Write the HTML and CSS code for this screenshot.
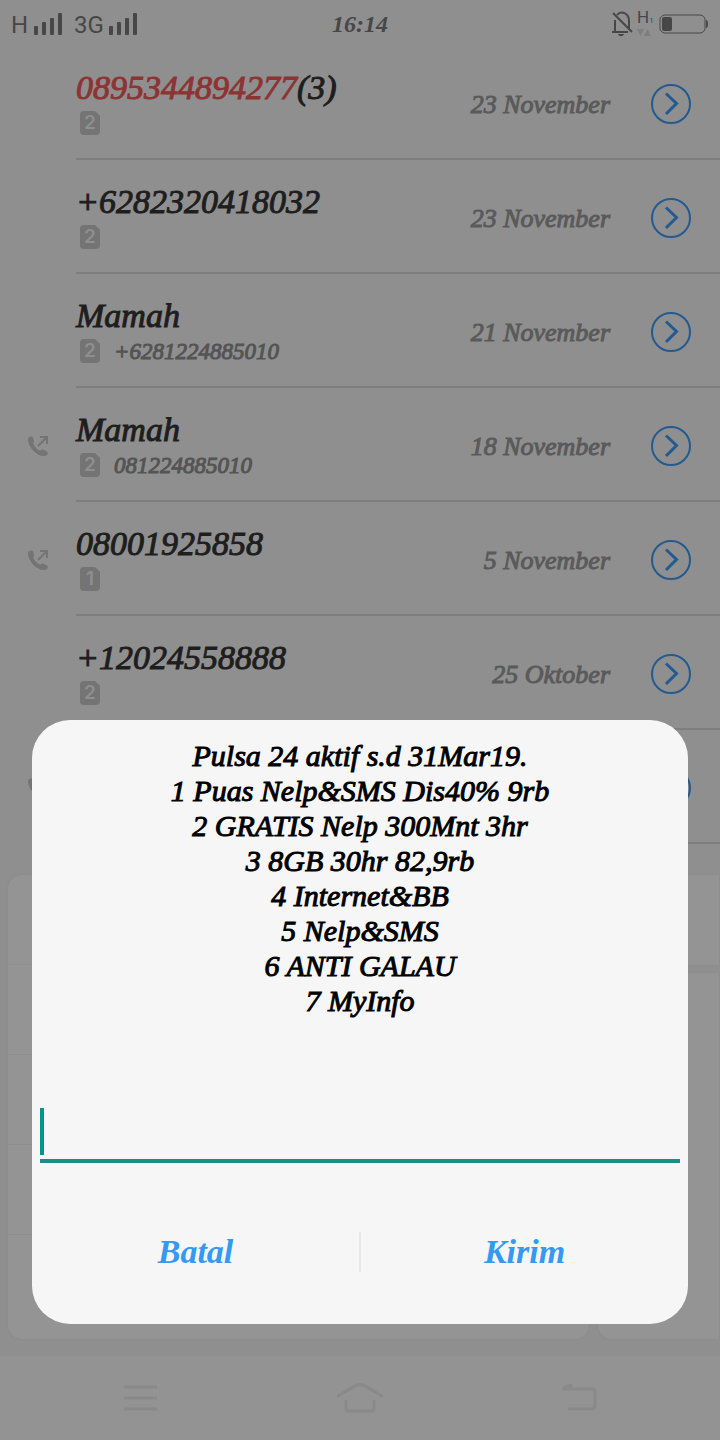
FILE: index.html
```html
<!DOCTYPE html>
<html lang="id">
<head>
    <meta charset="UTF-8">
    <meta name="viewport" content="width=device-width, initial-scale=1.0">
    <title>Telepon</title>
    <link rel="stylesheet" href="styles.css">
</head>
<body>
    <!-- shared icons -->
    <svg class="sprite" aria-hidden="true">
        <symbol id="signal" viewBox="0 0 28 22">
            <rect x="0" y="13" width="4" height="9" rx="1"/>
            <rect x="8" y="9" width="4" height="13" rx="1"/>
            <rect x="16" y="5" width="4" height="17" rx="1"/>
            <rect x="24" y="0" width="4" height="22" rx="1"/>
        </symbol>
        <symbol id="outgoing" viewBox="0 0 20 20">
            <path d="M0.500 1.500C2 0 4.500 0 5 1.500L6 4.500C6.300 6 5 7 5.500 8C6.500 10.500 9 13.500 11.500 14.500C13 14.800 13.500 13.300 15 13.500L19 15.500C20.500 17 20 18.500 18.500 19.500C14 21 9 19 5 14.500C1 10 -1 5 0.500 1.500Z"/>
            <path d="M10 10L18.500 1.500M12 1H19V8" fill="none" stroke="currentColor" stroke-width="2"/>
        </symbol>
        <symbol id="more" viewBox="0 0 40 40">
            <circle cx="20" cy="20" r="19"/>
            <path d="M15 9.500L25.500 19.500L15 30" stroke-width="3"/>
        </symbol>
    </svg>

    <div class="phone">
        <header class="status-bar">
            <div class="networks">
                <span class="network">H</span>
                <svg class="signal"><use href="#signal"/></svg>
                <span class="network second">3G</span>
                <svg class="signal"><use href="#signal"/></svg>
            </div>
            <time class="clock">16:14</time>
            <div class="status-icons">
                <svg class="bell" viewBox="0 0 22 26">
                    <path d="M4 20V9M6 4C10 -1 18 2 18 10V17M1 21H17M2 2L21 21" fill="none" stroke="currentColor" stroke-width="2"/>
                    <path d="M7 23H13C12 26 8 26 7 23Z"/>
                </svg>
                <div class="data">
                    <span class="data-type">H<small>1</small></span>
                    <svg class="data-arrows" viewBox="0 0 14 7"><path d="M0 0H7L3.500 7ZM7 7H14L10.500 0Z"/></svg>
                </div>
                <svg class="battery" viewBox="0 0 50 20">
                    <rect x="1" y="1" width="45" height="18" rx="5" fill="none" stroke="currentColor"/>
                    <rect x="3" y="3" width="10" height="14" rx="2"/>
                    <path d="M47 6Q49 6 49 10Q49 14 47 14Z"/>
                </svg>
            </div>
        </header>

        <main class="calls">
            <article class="call">
                <div class="call-body">
                    <div class="who">
                        <div class="name"><span class="missed">0895344894277</span>(3)</div>
                        <div class="line"><span class="sim">2</span></div>
                    </div>
                    <span class="date">23 November</span>
                    <button class="more" aria-label="Detail"><svg><use href="#more"/></svg></button>
                </div>
            </article>
            <article class="call">
                <div class="call-body">
                    <div class="who">
                        <div class="name">+6282320418032</div>
                        <div class="line"><span class="sim">2</span></div>
                    </div>
                    <span class="date">23 November</span>
                    <button class="more" aria-label="Detail"><svg><use href="#more"/></svg></button>
                </div>
            </article>
            <article class="call">
                <div class="call-body">
                    <div class="who">
                        <div class="name">Mamah</div>
                        <div class="line"><span class="sim">2</span><span class="number">+6281224885010</span></div>
                    </div>
                    <span class="date">21 November</span>
                    <button class="more" aria-label="Detail"><svg><use href="#more"/></svg></button>
                </div>
            </article>
            <article class="call">
                <svg class="outgoing"><use href="#outgoing"/></svg>
                <div class="call-body">
                    <div class="who">
                        <div class="name">Mamah</div>
                        <div class="line"><span class="sim">2</span><span class="number">081224885010</span></div>
                    </div>
                    <span class="date">18 November</span>
                    <button class="more" aria-label="Detail"><svg><use href="#more"/></svg></button>
                </div>
            </article>
            <article class="call">
                <svg class="outgoing"><use href="#outgoing"/></svg>
                <div class="call-body">
                    <div class="who">
                        <div class="name">08001925858</div>
                        <div class="line"><span class="sim">1</span></div>
                    </div>
                    <span class="date">5 November</span>
                    <button class="more" aria-label="Detail"><svg><use href="#more"/></svg></button>
                </div>
            </article>
            <article class="call">
                <div class="call-body">
                    <div class="who">
                        <div class="name">+12024558888</div>
                        <div class="line"><span class="sim">2</span></div>
                    </div>
                    <span class="date">25 Oktober</span>
                    <button class="more" aria-label="Detail"><svg><use href="#more"/></svg></button>
                </div>
            </article>
            <article class="call">
                <svg class="outgoing"><use href="#outgoing"/></svg>
                <div class="call-body">
                    <div class="who"></div>
                    <button class="more" aria-label="Detail"><svg><use href="#more"/></svg></button>
                </div>
            </article>
        </main>

        <!-- dial pad behind the dialog -->
        <div class="dialpad">
            <div class="pad keys">
                <div class="key-row"></div>
                <div class="key-row"></div>
                <div class="key-row"></div>
                <div class="key-row"></div>
            </div>
            <div class="side">
                <div class="pad side-top"></div>
                <div class="pad side-bottom"></div>
            </div>
        </div>

        <nav class="nav-bar">
            <button aria-label="Menu">
                <svg width="34" height="30" viewBox="0 0 34 30"><path d="M2 4H33M2 15H33M2 26H33"/></svg>
            </button>
            <button aria-label="Beranda">
                <svg width="48" height="30" viewBox="0 0 48 30"><path d="M2 13L19 3Q24 0 29 3L46 13M10 18V25Q10 28 13 28H35Q38 28 38 25V18"/></svg>
            </button>
            <button aria-label="Kembali">
                <svg width="36" height="30" viewBox="0 0 36 30"><path d="M2 6H30Q33 6 33 9V23Q33 26 30 26H7M2 5L9 2V6"/></svg>
            </button>
        </nav>
    </div>

    <form class="dialog" role="dialog" aria-labelledby="message">
        <p class="message" id="message">
            Pulsa 24 aktif s.d 31Mar19.<br>
            1 Puas Nelp&amp;SMS Dis40% 9rb<br>
            2 GRATIS Nelp 300Mnt 3hr<br>
            3 8GB 30hr 82,9rb<br>
            4 Internet&amp;BB<br>
            5 Nelp&amp;SMS<br>
            6 ANTI GALAU<br>
            7 MyInfo
        </p>
        <div class="reply">
            <input type="text" aria-labelledby="message">
            <span class="caret"></span>
        </div>
        <div class="actions">
            <button type="button">Batal</button>
            <span class="divider"></span>
            <button type="submit">Kirim</button>
        </div>
    </form>
</body>
</html>
```

FILE: styles.css
```css
* {
    box-sizing: border-box;
}

body {
    margin: 0;
    background: #8f8f8f;
    color: #1e1e1e;
    font-family: "Liberation Serif", serif;
    font-style: italic;
}

button {
    padding: 0;
    border: none;
    background: none;
    font: inherit;
    cursor: pointer;
}

svg {
    display: block;
    fill: currentColor;
}

.sprite {
    display: none;
}

.phone {
    position: relative;
    display: flex;
    flex-direction: column;
    min-height: 100vh;
}

/* status bar */
.status-bar {
    display: grid;
    grid-template-columns: 1fr auto 1fr;
    align-items: center;
    height: 46px;
    padding: 2px 11px 0;
    color: #474747;
}

.networks {
    display: flex;
    align-items: flex-end;
    font: 400 24px/24px Roboto, sans-serif;
}

.network {
    width: 23px;
    height: 22px;
}

.network.second {
    width: 35px;
    margin-left: 12px;
}

.signal {
    width: 28px;
    height: 22px;
}

.clock {
    font-size: 24px;
    font-weight: bold;
}

.status-icons {
    display: flex;
    justify-content: flex-end;
    align-items: center;
}

.bell {
    width: 22px;
    height: 26px;
}

.data {
    width: 21px;
    height: 30px;
    margin-left: 4px;
    font: 400 17px/16px Roboto, sans-serif;
}

.data-type {
    display: block;
}

.data small {
    font-size: 8px;
}

.data-arrows {
    width: 14px;
    height: 7px;
    color: #7e7e7e;
}

.battery {
    width: 50px;
    height: 20px;
    margin-left: 1px;
}

/* call log */
.calls {
    flex: 1;
}

.call {
    position: relative;
    padding-left: 76px;
}

.outgoing {
    position: absolute;
    left: 28px;
    top: 48px;
    width: 20px;
    height: 20px;
    color: #747474;
}

.call-body {
    display: flex;
    align-items: center;
    height: 114px;
    padding: 4px 29px 0 0;
    border-bottom: 2px solid #7e7e7e;
}

.who {
    flex: 1;
}

.name {
    font-size: 34px;
    line-height: 38px;
    -webkit-text-stroke: 1px currentColor;
}

.missed {
    color: #8c3434;
}

.line {
    display: flex;
    align-items: center;
    height: 32px;
    padding-left: 4px;
}

.sim {
    width: 20px;
    height: 24px;
    border-radius: 4px;
    background: #747474;
    clip-path: polygon(0 0, 75% 0, 100% 20%, 100% 100%, 0 100%);
    color: #8f8f8f;
    font: 600 19px/24px Inter, sans-serif;
    text-align: center;
}

.number {
    margin-left: 14px;
    padding-top: 2px;
    color: #545454;
    font-size: 23px;
}

.number,
.date {
    -webkit-text-stroke: 1px currentColor;
}

.date {
    padding-top: 2px;
    color: #5a5a5a;
    font-size: 26px;
}

.more {
    margin-left: 41px;
}

.more svg {
    width: 40px;
    height: 40px;
    fill: none;
    stroke: #235b91;
    stroke-width: 2;
}

/* dial pad */
.dialpad {
    position: absolute;
    left: 8px;
    right: 1px;
    bottom: 101px;
    display: flex;
    gap: 9px;
    height: 464px;
}

.pad {
    border-radius: 14px;
    background: #949494;
    box-shadow: 0 0 2px #888888;
}

.keys {
    flex: 581;
}

.key-row {
    height: 90px;
    border-bottom: 1px solid #8d8d8d;
}

.side {
    flex: 121;
    display: flex;
    flex-direction: column;
    gap: 8px;
}

.side-top {
    height: 90px;
    border-radius: 14px 0 0 14px;
}

.side-bottom {
    flex: 1;
    border-radius: 14px 0 0 14px;
}

/* navigation bar */
.nav-bar {
    display: grid;
    grid-template-columns: repeat(3, 1fr);
    height: 84px;
    padding: 0 30px;
    background: #939393;
    z-index: 1;
}

.nav-bar button {
    display: flex;
    align-items: center;
    justify-content: center;
}

.nav-bar svg {
    fill: none;
    stroke: #898989;
    stroke-width: 3;
    stroke-linecap: round;
    stroke-linejoin: round;
}

/* USSD dialog */
.dialog {
    position: fixed;
    left: 32px;
    right: 32px;
    bottom: 116px;
    z-index: 2;
    padding-top: 18px;
    border-radius: 38px;
    background: #f6f6f6;
    color: #000000;
}

.message {
    margin: 0;
    font-size: 30px;
    line-height: 35px;
    text-align: center;
    -webkit-text-stroke: 1px currentColor;
}

.reply {
    position: relative;
    margin: 82px 8px 0;
}

.reply input {
    display: block;
    width: 100%;
    height: 63px;
    padding: 0 8px;
    border: none;
    border-bottom: 4px solid #159086;
    outline: none;
    background: none;
    font: inherit;
    font-size: 30px;
}

.caret {
    position: absolute;
    left: 0;
    top: 8px;
    width: 4px;
    height: 47px;
    background: #009688;
}

.actions {
    display: flex;
    align-items: center;
    height: 144px;
    margin-top: 17px;
}

.actions button {
    flex: 1;
    height: 80px;
    color: #3399f3;
    font-size: 34px;
    font-weight: bold;
}

.divider {
    width: 2px;
    height: 40px;
    background: #e9e9e9;
}
```
